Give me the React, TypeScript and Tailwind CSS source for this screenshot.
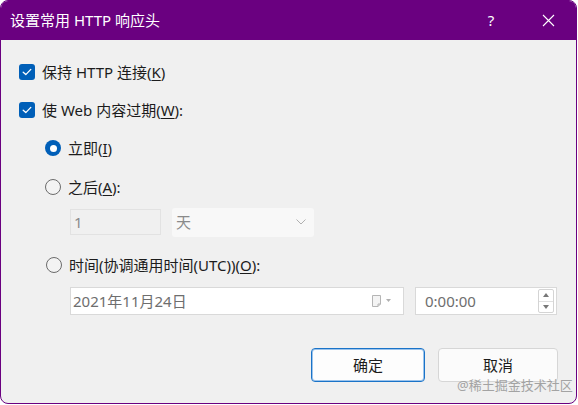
import React from "react";

const font = { fontFamily: '"Noto Sans", "Noto Sans CJK SC", sans-serif' };

function Check() {
  return (
    <div className="w-[16px] h-[16px] rounded-[3px] bg-[#005fb8] flex items-center justify-center shrink-0">
      <svg width="10" height="8" viewBox="0 0 10 8" fill="none">
        <path d="M1.2 4.2 L3.8 6.6 L8.8 1.4" stroke="white" strokeWidth="1.3" strokeLinecap="round" strokeLinejoin="round" />
      </svg>
    </div>
  );
}

function Radio({ on }: { on?: boolean }) {
  if (on)
    return (
      <div className="w-[16px] h-[16px] rounded-full bg-[#005fb8] flex items-center justify-center shrink-0">
        <div className="w-[7px] h-[7px] rounded-full bg-white" />
      </div>
    );
  return <div className="w-[16px] h-[16px] rounded-full border border-[#6b6b6b] bg-[#f3f3f3] shrink-0" />;
}

export default function App() {
  return (
    <div className="w-[578px] h-[405px] bg-white" style={font}>
      <div className="w-[577px] h-[404px] rounded-[8px] border border-[#6a0080] bg-[#f0f0f0] overflow-hidden flex flex-col relative">
        {/* Title bar */}
        <div className="h-[39px] bg-[#6a0080] flex items-center shrink-0">
          <div className="pl-[9px] text-[15px] text-white leading-none">设置常用 HTTP 响应头</div>
          <div className="ml-auto flex items-center h-full">
            <div className="w-[40px] h-full flex items-center justify-center text-white text-[15px] leading-none">?</div>
            <div className="w-[46px] h-full ml-[14px] mr-[5px] flex items-center justify-center">
              <svg width="13" height="13" viewBox="0 0 13 13">
                <path d="M1 1 L12 12 M12 1 L1 12" stroke="white" strokeWidth="1.1" />
              </svg>
            </div>
          </div>
        </div>

        {/* Body */}
        <div className="flex flex-col pt-[12px] text-[15px] text-[#1c1c1c]">
          <div className="h-[40px] flex items-center pl-[18px] gap-[7px]">
            <Check />
            <span className="leading-none">保持 HTTP 连接(<span className="underline underline-offset-2">K</span>)</span>
          </div>
          <div className="h-[36px] flex items-center pl-[18px] gap-[7px]">
            <Check />
            <span className="leading-none">使 Web 内容过期(<span className="underline underline-offset-2">W</span>):</span>
          </div>
          <div className="h-[40px] flex items-center pl-[44px] gap-[7px]">
            <Radio on />
            <span className="leading-none">立即(<span className="underline underline-offset-2">I</span>)</span>
          </div>
          <div className="h-[38px] flex items-center pl-[44px] gap-[7px]">
            <Radio />
            <span className="leading-none">之后(<span className="underline underline-offset-2">A</span>):</span>
          </div>
          <div className="h-[32px] flex items-center pl-[69px]">
            <div className="w-[91px] h-[26px] border border-[#e2e2e2] bg-[#f0f0f0] flex items-center pl-[3px] text-[#8a8a8a] leading-none">1</div>
            <div className="w-[142px] h-[29px] ml-[11px] bg-[#f8f8f8] rounded-[3px] flex items-center pl-[4px] pr-[8px] text-[#8a8a8a] leading-none">
              <span>天</span>
              <svg className="ml-auto" width="10" height="6" viewBox="0 0 10 6">
                <path d="M0.5 0.5 L5 5 L9.5 0.5" stroke="#b0b0b0" strokeWidth="1" fill="none" />
              </svg>
            </div>
          </div>
          <div className="h-[30px] mt-[12px] flex items-center pl-[45px] gap-[7px]">
            <Radio />
            <span className="leading-none">时间(协调通用时间(UTC))(<span className="underline underline-offset-2">O</span>):</span>
          </div>
          <div className="h-[30px] mt-[6px] flex items-center pl-[69px]">
            <div className="w-[334px] h-[28px] border border-[#d9d9d9] bg-white flex items-center pl-[2px] pr-[10px] text-[#6e6e6e] leading-none">
              <span>2021年11月24日</span>
              <svg className="ml-auto" width="22" height="14" viewBox="0 0 22 14">
                <path d="M1.5 1.5 H9.5 V10 L7 12.5 H1.5 Z" fill="#f4f4f4" stroke="#b5b5b5" strokeWidth="1" />
                <path d="M7 12.5 V10 H9.5" fill="none" stroke="#b5b5b5" strokeWidth="1" />
                <path d="M15 5 H20 L17.5 8 Z" fill="#b0b0b0" />
              </svg>
            </div>
            <div className="w-[142px] h-[28px] ml-[11px] border border-[#d9d9d9] bg-white flex items-center pl-[9px] pr-[2px] text-[#6e6e6e] leading-none">
              <span>0:00:00</span>
              <div className="ml-auto flex flex-col h-[24px] w-[16px] border border-[#d4d4d4] rounded-[2px]">
                <div className="flex-1 flex items-center justify-center border-b border-[#e0e0e0]">
                  <svg width="6" height="4" viewBox="0 0 6 4"><path d="M0 4 L3 0 L6 4 Z" fill="#777" /></svg>
                </div>
                <div className="flex-1 flex items-center justify-center">
                  <svg width="6" height="4" viewBox="0 0 6 4"><path d="M0 0 L3 4 L6 0 Z" fill="#777" /></svg>
                </div>
              </div>
            </div>
          </div>
          <div className="mt-[32px] flex items-center pl-[310px] gap-[13px]">
            <div className="w-[114px] h-[34px] rounded-[4px] border border-[#1a73c8] shadow-[inset_0_0_0_1px_#9cc4ec] bg-[#fdfdfd] flex items-center justify-center leading-none">确定</div>
            <div className="w-[120px] h-[34px] rounded-[4px] border border-[#d6d6d6] bg-[#fbfbfb] flex items-center justify-center leading-none">取消</div>
          </div>
        </div>

        <div className="absolute left-[456px] top-[378px] text-[13px] leading-none text-[#9b9b9b] opacity-90">@稀土掘金技术社区</div>
      </div>
    </div>
  );
}
